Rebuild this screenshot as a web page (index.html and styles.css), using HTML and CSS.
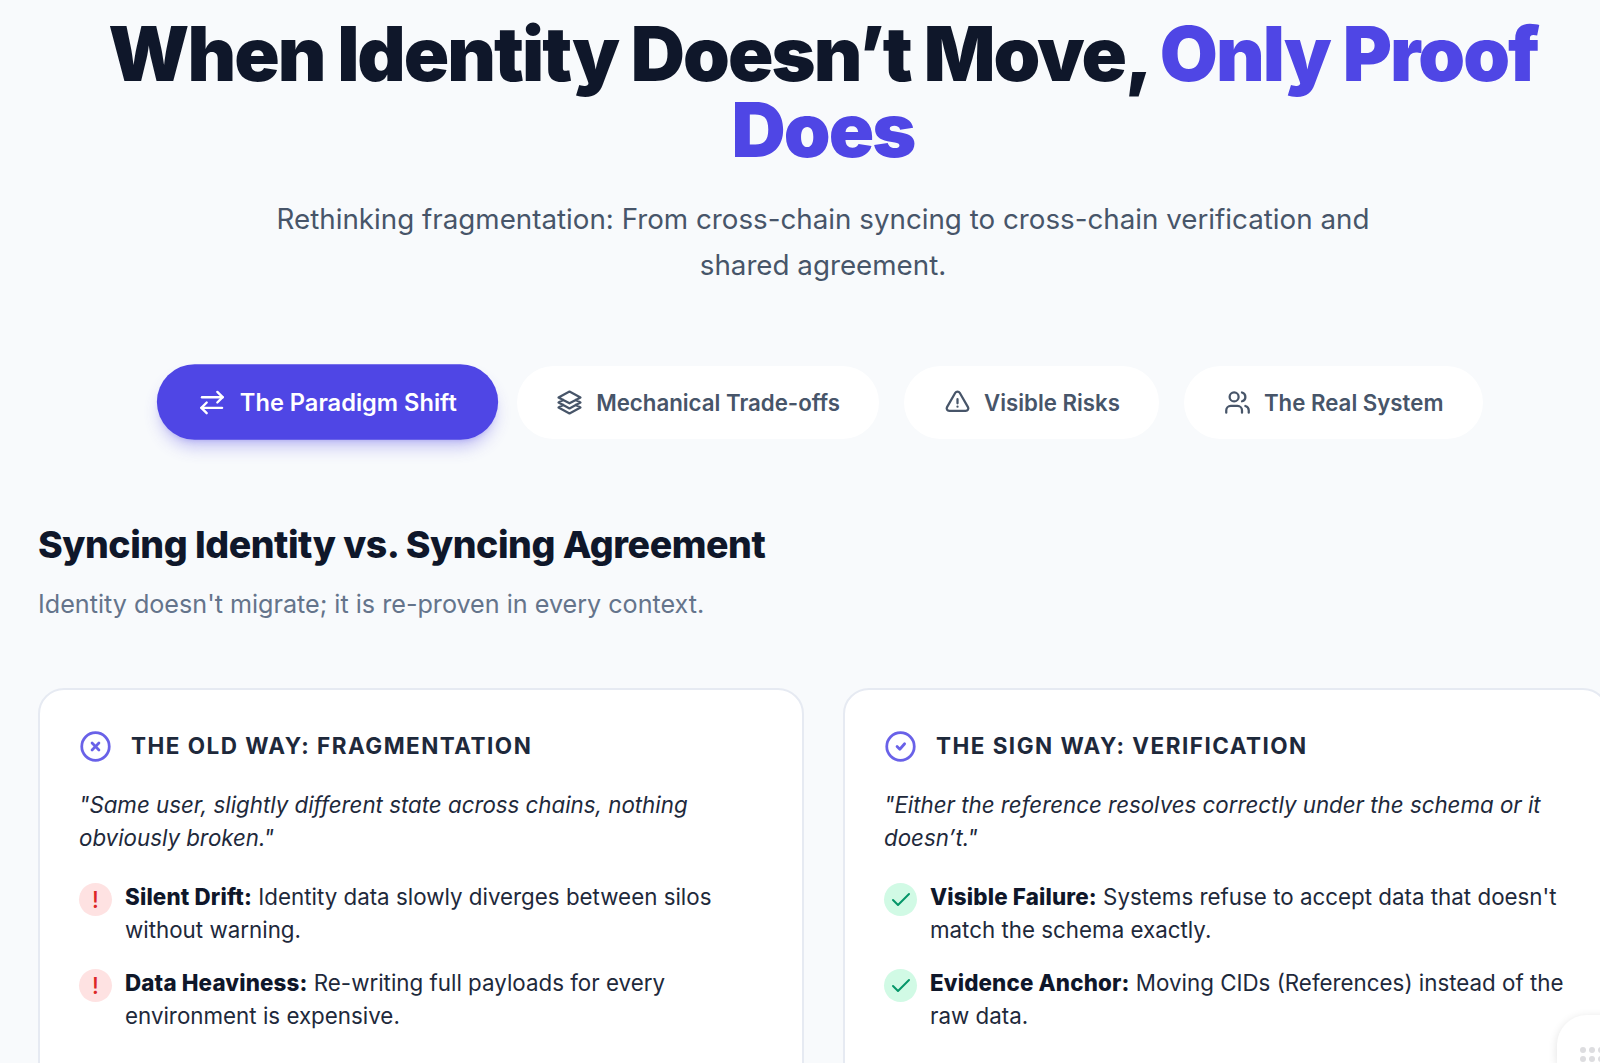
FILE: index.html
```html
<!DOCTYPE html>
<html lang="en">
<head>
  <meta charset="UTF-8">
  <title>When Identity Doesn't Move, Only Proof Does</title>
  <link rel="stylesheet" href="styles.css">
</head>
<body>
  <div class="page">
    <header class="hero">
      <h1>When Identity Doesn’t Move, <span class="accent">Only Proof Does</span></h1>
      <p>Rethinking fragmentation: From cross-chain syncing to cross-chain verification and shared agreement.</p>
    </header>

    <nav class="tabs">
      <a class="tab active">
        <svg class="tab-icon" viewBox="0 0 24 24"><path d="m16.5 3 4.5 4.5-4.5 4.5"/><path d="M21 7.5H3.5"/><path d="M7.5 21 3 16.5 7.5 12"/><path d="M3 16.5h17.5"/></svg>
        The Paradigm Shift
      </a>
      <a class="tab">
        <svg class="tab-icon" viewBox="0 0 24 24"><path d="M6.43 9.75 2.25 12l4.18 2.25m0-4.5 5.57 3 5.57-3m-11.14 0L2.25 7.5 12 2.25l9.75 5.25-4.18 2.25m0 0L21.75 12l-4.18 2.25m0 0 4.18 2.25L12 21.75 2.25 16.5l4.18-2.25m11.14 0-5.57 3-5.57-3"/></svg>
        Mechanical Trade-offs
      </a>
      <a class="tab">
        <svg class="tab-icon" viewBox="0 0 24 24"><path d="M12 9v3.75m-9.3 3.38c-.87 1.5.22 3.37 1.95 3.37h14.7c1.73 0 2.82-1.87 1.95-3.37L13.95 3.38c-.87-1.5-3.03-1.5-3.9 0L2.7 16.13z"/><path d="M12 15.75h.01"/></svg>
        Visible Risks
      </a>
      <a class="tab">
        <svg class="tab-icon" viewBox="0 0 24 24"><path d="M16 21v-2a4 4 0 0 0-4-4H6a4 4 0 0 0-4 4v2"/><circle cx="9" cy="7" r="4"/><path d="M22 21v-2a4 4 0 0 0-3-3.87"/><path d="M16 3.13a4 4 0 0 1 0 7.75"/></svg>
        The Real System
      </a>
    </nav>

    <section class="section-head">
      <h2>Syncing Identity vs. Syncing Agreement</h2>
      <p>Identity doesn't migrate; it is re-proven in every context.</p>
    </section>

    <div class="cards">
      <article class="card">
        <h3>
          <svg class="head-icon" viewBox="0 0 24 24"><circle cx="12" cy="12" r="10"/><path d="m14.5 9.5-5 5"/><path d="m9.5 9.5 5 5"/></svg>
          The Old Way: Fragmentation
        </h3>
        <p class="quote">"Same user, slightly different state across chains, nothing obviously broken."</p>
        <ul>
          <li>
            <span class="badge bad">!</span>
            <div><strong>Silent Drift:</strong> Identity data slowly diverges between silos without warning.</div>
          </li>
          <li>
            <span class="badge bad">!</span>
            <div><strong>Data Heaviness:</strong> Re-writing full payloads for every environment is expensive.</div>
          </li>
        </ul>
      </article>
      <article class="card">
        <h3>
          <svg class="head-icon" viewBox="0 0 24 24"><circle cx="12" cy="12" r="10"/><path d="m9.5 12 2 2 3.5-4"/></svg>
          The Sign Way: Verification
        </h3>
        <p class="quote">"Either the reference resolves correctly under the schema or it doesn’t."</p>
        <ul>
          <li>
            <span class="badge good"><svg viewBox="0 0 24 24"><path d="M20 6 9 17l-5-5"/></svg></span>
            <div><strong>Visible Failure:</strong> Systems refuse to accept data that doesn't match the schema exactly.</div>
          </li>
          <li>
            <span class="badge good"><svg viewBox="0 0 24 24"><path d="M20 6 9 17l-5-5"/></svg></span>
            <div><strong>Evidence Anchor:</strong> Moving CIDs (References) instead of the raw data.</div>
          </li>
        </ul>
      </article>
    </div>
  </div>

  <div class="handle">
    <i></i><i></i><i></i><i></i><i></i><i></i>
  </div>
</body>
</html>
```

FILE: styles.css
```css
* {
  margin: 0;
  padding: 0;
  box-sizing: border-box;
}
html, body {
  height: 1063px;
  overflow: hidden;
}
body {
  background-color: #f8fafc;
  font-family: Inter, "Liberation Sans", sans-serif;
  color: #0f172a;
}
.page {
  width: 1608px;
  height: 1063px;
  padding-left: 38px;
  overflow: hidden;
}

.hero {
  padding-top: 16px;
  text-align: center;
}
.hero h1 {
  width: 1470px;
  margin: 0 auto;
  font-size: 75px;
  line-height: 76px;
  font-weight: 900;
  letter-spacing: -0.026em;
  color: #0f172a;
}
.accent {
  color: #4f46e5;
}
.hero p {
  width: 1140px;
  margin: 28px auto 0;
  font-size: 27.75px;
  line-height: 46px;
  color: #475569;
}

.tabs {
  display: flex;
  justify-content: center;
  gap: 25px;
  margin-top: 78px;
  padding-left: 2px;
}
.tab {
  display: flex;
  align-items: center;
  gap: 13px;
  height: 73px;
  padding: 0 39.5px;
  border-radius: 37px;
  background-color: #fff;
  font-size: 22.25px;
  font-weight: 600;
  color: #475569;
}
.tab.active {
  height: 72px;
  margin-right: 2px;
  padding: 0 39px;
  background-color: #4f46e5;
  font-size: 22.5px;
  color: #fff;
  transform: scale(1.05);
  box-shadow: 0 10px 15px -3px rgba(79, 70, 229, 0.3), 0 4px 6px -4px rgba(79, 70, 229, 0.3);
}
.tab-icon {
  width: 27px;
  height: 27px;
  fill: none;
  stroke: currentColor;
  stroke-width: 2;
  stroke-linecap: round;
  stroke-linejoin: round;
}

.section-head {
  margin-top: 79px;
}
.section-head h2 {
  font-size: 37.5px;
  line-height: 54px;
  font-weight: 800;
  letter-spacing: -0.0125em;
}
.section-head p {
  margin-top: 14px;
  font-size: 25.15px;
  line-height: 36px;
  color: #64748b;
}

.cards {
  display: grid;
  grid-template-columns: 766px 766px;
  gap: 39px;
  margin-top: 66px;
}
.card {
  height: 500px;
  padding: 38px 39px;
  background-color: #fff;
  border: 2px solid #e6eaf2;
  border-radius: 26px;
}
.card h3 {
  display: flex;
  align-items: center;
  gap: 19px;
  font-size: 22.5px;
  line-height: 36px;
  font-weight: 700;
  letter-spacing: 0.065em;
  text-transform: uppercase;
  color: #1e293b;
}
.head-icon {
  width: 33px;
  height: 33px;
  fill: none;
  stroke: #4f46e5;
  stroke-width: 2;
  stroke-linecap: round;
  stroke-linejoin: round;
  opacity: 0.85;
}
.quote {
  margin-top: 24px;
  font-size: 22.3px;
  line-height: 33px;
  font-style: italic;
  color: #1e293b;
}
.card ul {
  list-style: none;
  margin-top: 26px;
}
.card li {
  display: flex;
  gap: 13px;
  margin-bottom: 20px;
  font-size: 22.35px;
  line-height: 33px;
  color: #1e293b;
}
.card strong {
  font-weight: 800;
  letter-spacing: 0.15px;
  color: #0f172a;
}
.badge {
  flex: none;
  display: flex;
  align-items: center;
  justify-content: center;
  width: 33px;
  height: 33px;
  margin-top: 3px;
  border-radius: 50%;
  font-size: 22.5px;
  font-weight: 500;
}
.badge.bad {
  background-color: #fee2e2;
  color: #dc2626;
}
.badge.good {
  background-color: #d1fae5;
}
.badge svg {
  width: 24px;
  height: 24px;
  fill: none;
  stroke: #059669;
  stroke-width: 2;
  stroke-linecap: round;
  stroke-linejoin: round;
}

.handle {
  position: absolute;
  left: 1557px;
  top: 1015px;
  width: 80px;
  height: 48px;
  padding: 32px 0 0 23px;
  display: grid;
  grid-template-columns: repeat(3, 6px);
  grid-auto-rows: 6px;
  gap: 3px;
  background-color: #fff;
  border-radius: 30px 0 0 0;
  box-shadow: 0 2px 10px rgba(0, 0, 0, 0.12);
}
.handle i {
  background-color: #dddde0;
  border-radius: 50%;
}
```
